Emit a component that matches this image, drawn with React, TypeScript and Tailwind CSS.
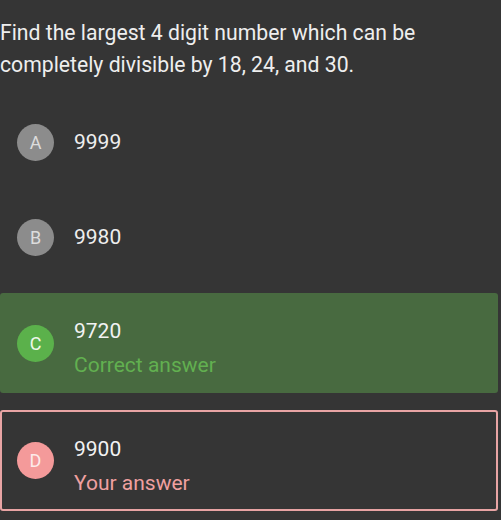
import React from "react";

function Circle({ letter, bg, fg }: { letter: string; bg: string; fg: string }) {
  return (
    <div className={`w-[37px] h-[37px] rounded-full flex items-center justify-center shrink-0 text-[18px] ${bg} ${fg}`}>
      {letter}
    </div>
  );
}

export default function App() {
  return (
    <div
      className="w-[501px] h-[520px] bg-[#353535] overflow-hidden text-[#eeeeee]"
      style={{ fontFamily: "Roboto, 'Noto Sans', sans-serif" }}
    >
      <div className="pt-[17px] pl-0 pr-4 text-[21.2px] leading-[32px]">
        Find the largest 4 digit number which can be completely divisible by 18, 24, and 30.
      </div>

      <div className="mt-[43px] flex items-center h-[37px] pl-[17px]">
        <Circle letter="A" bg="bg-[#8c8c8c]" fg="text-[#dcdcdc]" />
        <div className="ml-[20px] text-[21px]">9999</div>
      </div>

      <div className="mt-[58px] flex items-center h-[37px] pl-[17px]">
        <Circle letter="B" bg="bg-[#8c8c8c]" fg="text-[#dcdcdc]" />
        <div className="ml-[20px] text-[21px]">9980</div>
      </div>

      <div className="mt-[37px] h-[100px] w-[498px] rounded-[3px] bg-[#486a40] flex items-center pl-[17px]">
        <Circle letter="C" bg="bg-[#5bb14b]" fg="text-[#eef8ea]" />
        <div className="ml-[20px] mt-[10px] flex flex-col">
          <div className="text-[21px] leading-[34px] text-[#f2f2f2]">9720</div>
          <div className="text-[21px] leading-[34px] text-[#62b050]">Correct answer</div>
        </div>
      </div>

      <div className="mt-[17px] h-[101px] w-[498px] rounded-[3px] border-2 border-[#e8a4a4] flex items-center pl-[15px]">
        <Circle letter="D" bg="bg-[#f49a9a]" fg="text-[#fdeaea]" />
        <div className="ml-[20px] mt-[10px] flex flex-col">
          <div className="text-[21px] leading-[34px] text-[#f2f2f2]">9900</div>
          <div className="text-[21px] leading-[34px] text-[#f0a0a0]">Your answer</div>
        </div>
      </div>
    </div>
  );
}
